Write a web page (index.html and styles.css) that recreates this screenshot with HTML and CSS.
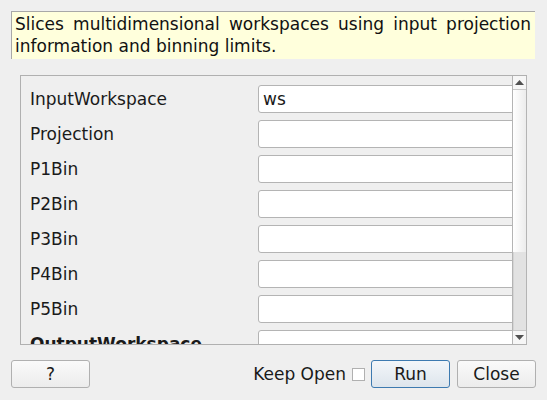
FILE: index.html
```html
<!DOCTYPE html>
<html>
<head>
<meta charset="utf-8">
<link rel="stylesheet" href="styles.css">
</head>
<body>
<div class="desc">Slices multidimensional workspaces using input projection information and binning limits.</div>
<div class="scroll">
  <div class="viewport">
    <div class="row"><span class="label">InputWorkspace</span><span class="field">ws</span></div>
    <div class="row"><span class="label">Projection</span><span class="field"></span></div>
    <div class="row"><span class="label">P1Bin</span><span class="field"></span></div>
    <div class="row"><span class="label">P2Bin</span><span class="field"></span></div>
    <div class="row"><span class="label">P3Bin</span><span class="field"></span></div>
    <div class="row"><span class="label">P4Bin</span><span class="field"></span></div>
    <div class="row"><span class="label">P5Bin</span><span class="field"></span></div>
    <div class="row"><span class="label bold">OutputWorkspace</span><span class="field"></span></div>
  </div>
  <div class="vbar">
    <div class="arrow up"><svg width="9" height="5" viewBox="0 0 9 5"><polygon points="0,5 9,5 4.5,0" fill="#505050"/></svg></div>
    <div class="track"></div>
    <div class="handle"></div>
    <div class="arrow down"><svg width="9" height="5" viewBox="0 0 9 5"><polygon points="0,0 9,0 4.5,5" fill="#505050"/></svg></div>
  </div>
</div>
<div class="buttons">
  <button class="btn help">?</button>
  <div class="spacer"></div>
  <span class="keep">Keep Open</span>
  <span class="check"></span>
  <button class="btn run">Run</button>
  <button class="btn close">Close</button>
</div>
</body>
</html>
```
FILE: styles.css
```css
html, body {
  margin: 0;
  padding: 0;
  background: #efefef;
  font-family: "DejaVu Sans", sans-serif;
  font-size: 17px;
  color: #1a1a1a;
  width: 547px;
  height: 400px;
  overflow: hidden;
}
.desc {
  margin: 11px 12px 0 11px;
  height: 48px;
  box-sizing: border-box;
  border-top: 1px solid #a8a8a8;
  border-left: 1px solid #a8a8a8;
  background: #ffffdc;
  padding: 1px 4px 0 3px;
  line-height: 22px;
  text-align: justify;
  color: #111;
}
.scroll {
  margin: 16px 0 0 20px;
  width: 507px;
  height: 270px;
  box-sizing: border-box;
  border: 1px solid #b0b0b0;
  border-right: none;
  display: flex;
}
.viewport {
  flex: 1;
  overflow: hidden;
  padding: 9px 0 0 9px;
  display: flex;
  flex-direction: column;
  gap: 7px;
}
.row {
  display: flex;
  align-items: center;
  height: 28px;
  flex: none;
}
.label {
  width: 228px;
  flex: none;
  white-space: nowrap;
}
.bold { font-weight: bold; }
.field {
  flex: none;
  width: 270px;
  height: 28px;
  box-sizing: border-box;
  border: 1px solid #b4b4b4;
  border-radius: 3px;
  background: #fff;
  padding-left: 4px;
  line-height: 26px;
}
.vbar {
  width: 15px;
  flex: none;
  box-sizing: border-box;
  border-left: 1px solid #b4b4b4;
  border-right: 1px solid #b4b4b4;
  display: flex;
  flex-direction: column;
}
.arrow {
  height: 14px;
  flex: none;
  display: flex;
  align-items: center;
  justify-content: center;
  background: #f6f6f6;
  box-sizing: border-box;
}
.arrow.up { border-bottom: 1px solid #c8c8c8; }
.arrow.down { border-top: 1px solid #c8c8c8; }
.track {
  height: 162px;
  flex: none;
  background: linear-gradient(to right, #ffffff, #ececec);
}
.handle {
  flex: 1;
  background: #e2e2e2;
  border-left: 1px solid #d4d4d4;
}
.buttons {
  display: flex;
  align-items: center;
  margin: 15px 11px 0 11px;
  height: 28px;
}
.spacer { flex: 1; }
.btn {
  font-family: "DejaVu Sans", sans-serif;
  font-size: 17px;
  color: #1a1a1a;
  height: 28px;
  width: 79px;
  box-sizing: border-box;
  border: 1px solid #b0b0b0;
  border-radius: 3px;
  background: linear-gradient(#fafafa, #ececec);
  padding: 0;
}
.keep { margin-right: 6px; }
.check {
  width: 13px;
  height: 13px;
  box-sizing: border-box;
  border: 1px solid #b0b0b0;
  background: #fff;
  margin-right: 6px;
}
.run {
  border-color: #3d7ab0;
  background: linear-gradient(#f3f6f9, #dde5ec);
  margin-right: 7px;
}
```
